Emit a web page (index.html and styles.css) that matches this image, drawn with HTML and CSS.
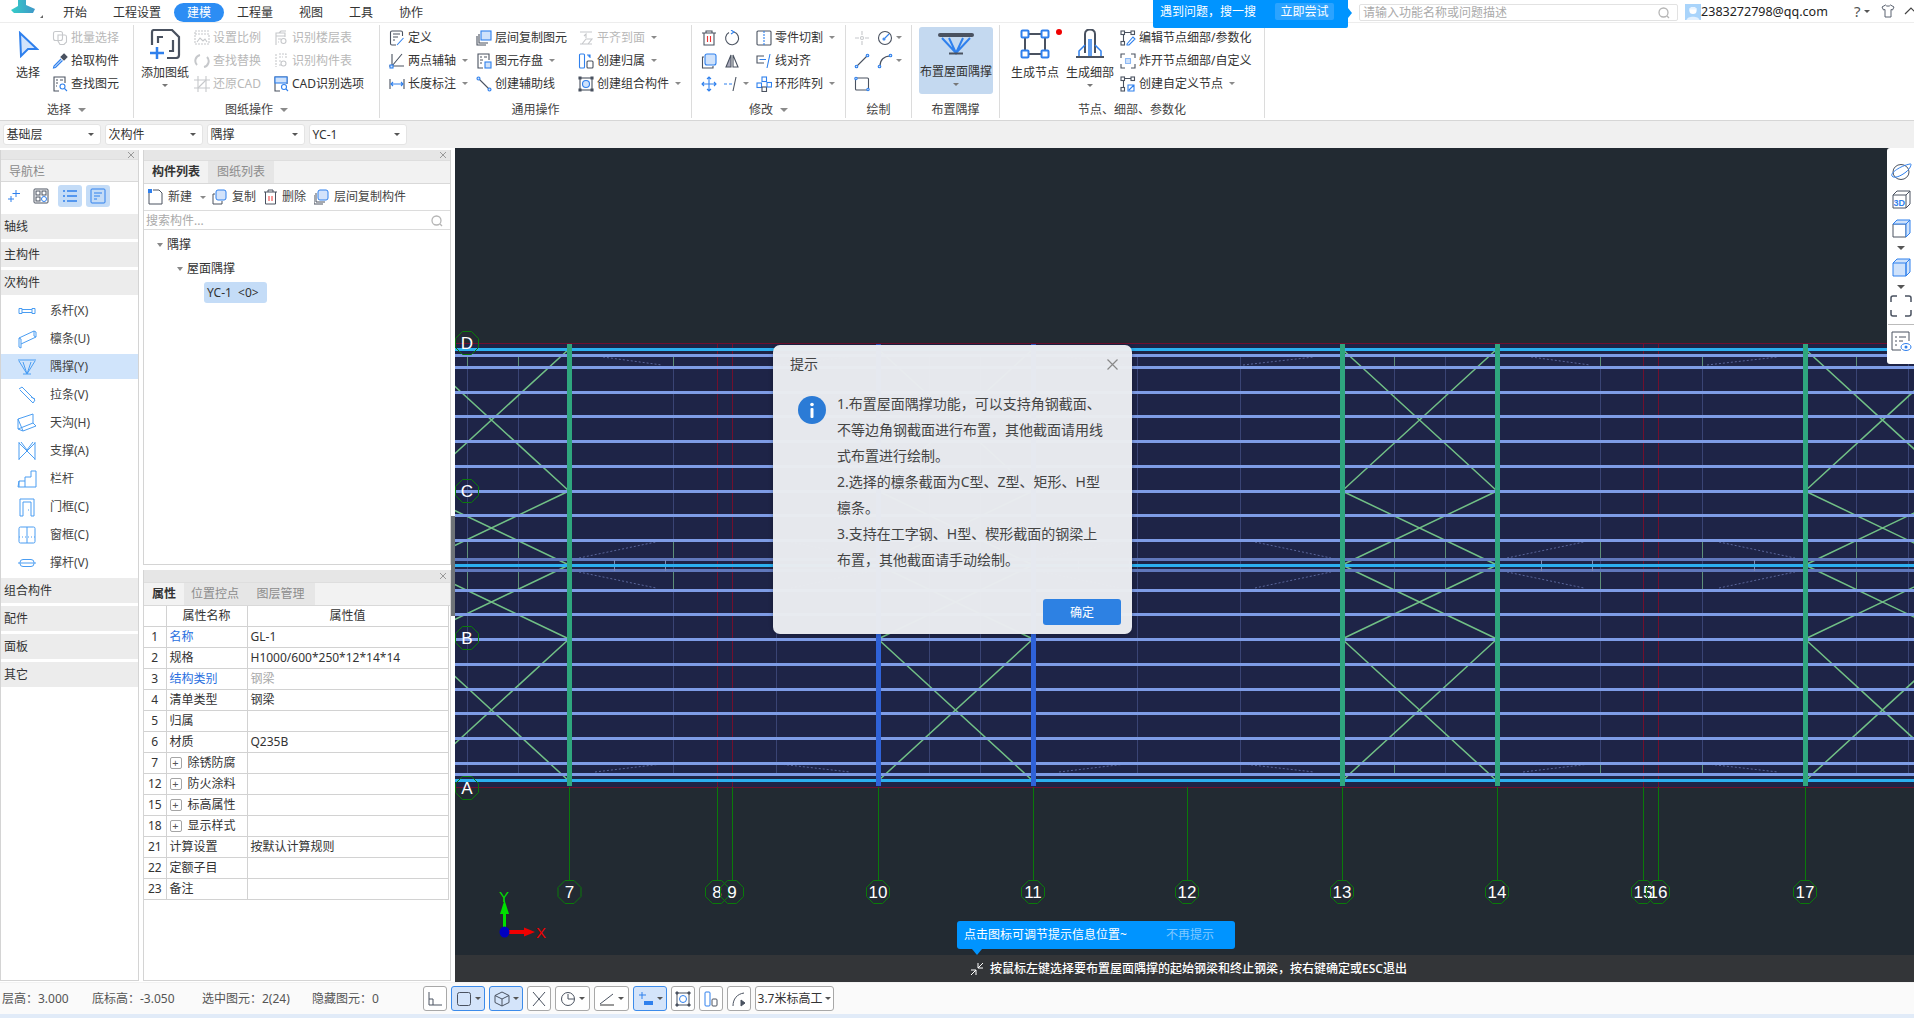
FILE: index.html
```html
<!DOCTYPE html>
<html lang="zh-CN">
<head>
<meta charset="utf-8">
<title>建模</title>
<link rel="stylesheet" href="styles.css">
</head>
<body>
<div class="app">

<header class="menubar">
  <div class="logo">
    <svg width="50" height="23" viewBox="0 0 50 23"><defs><linearGradient id="lg" x1="0" x2="1"><stop offset="0" stop-color="#35cdc8"/><stop offset="1" stop-color="#3f97c8"/></linearGradient></defs><path d="M18 0H26V5L35 9L33 13H14L11 10L18 6Z" fill="url(#lg)"/><path d="M43 15V18H40Z" fill="#666"/></svg>
  </div>
  <nav class="tabs">
    <span class="tab">开始</span><span class="tab">工程设置</span><span class="tab on">建模</span><span class="tab">工程量</span><span class="tab">视图</span><span class="tab">工具</span><span class="tab">协作</span>
  </nav>
  <div class="banner"><span>遇到问题，搜一搜</span><b>立即尝试</b></div>
  <div class="search"><span>请输入功能名称或问题描述</span><svg width="12" height="12" viewBox="0 0 12 12" class="lens"><circle cx="5.5" cy="5.5" r="4.5"/><path d="M9 9L11 11"/></svg></div>
  <svg class="avatar" width="16" height="16" viewBox="0 0 16 16"><rect width="16" height="16" fill="#a9d4fb"/><circle cx="8" cy="6.5" r="3.6" fill="#fff"/><path d="M4 5.5C4 2 12 2 12 5.5Z" fill="#e9f4ff"/><path d="M1.500 16C2 11.500 14 11.500 14.500 16Z" fill="#e4f1fe"/></svg>
  <span class="email">2383272798@qq.com</span>
  <span class="help">?</span><i class="dd tiny"></i>
  <svg class="shirt" width="14" height="14" viewBox="0 0 14 14"><path d="M4.500 1L1 3L2.500 6L4 5.500V13H10V5.500L11.500 6L13 3L9.500 1C9 2.500 5 2.500 4.500 1Z"/></svg>
  <svg class="caret" width="14" height="8" viewBox="0 0 14 8"><path d="M1 7L7 1L13 7"/></svg>
</header>

<section class="ribbon">
  <div class="group g1">
    <div class="gbody">
      <div class="big bsel">
        <svg class="bigic" width="22" height="27" viewBox="0 0 22 27"><path d="M3 2L20 18H11L4 25Z" fill="#d3e3fb" stroke="#2f80ed" stroke-width="2"/></svg>
        <span>选择</span>
      </div>
      <div class="col">
        <div class="ri off"><svg class="ic g" viewBox="0 0 16 16"><rect x="1.500" y="1.500" width="9" height="9" rx="2"/><path d="M6 5H13C14 5 14.500 6 14.500 7V12L12 14.500H8L6 11Z"/></svg><span>批量选择</span></div>
        <div class="ri"><svg class="ic" viewBox="0 0 16 16"><path d="M12 1L15 4L12 7L9 4Z" fill="#4a5260"/><path d="M9 6L2 13L1.500 15L3.500 14.500L10.500 7.500" stroke="#2f80ed" fill="#cfe2fb"/></svg><span>拾取构件</span></div>
        <div class="ri"><svg class="ic" viewBox="0 0 16 16"><path d="M7 15H2V1H13V7"/><path d="M4 4H6M8 4H11M4 7H6M4 10H5"/><circle class="bl" cx="10.500" cy="10.500" r="2.500"/><path class="bl" d="M12.500 12.500L15 15"/></svg><span>查找图元</span></div>
      </div>
    </div>
    <div class="glabel">选择<i class="dd big-dd"></i></div>
  </div>

  <div class="group g2">
    <div class="gbody">
      <div class="big badd">
        <svg class="bigic" width="32" height="30" viewBox="0 0 32 30"><g fill="none" stroke="#4a5260" stroke-width="2.200"><path d="M3 16V3C3 2 4 1 5 1H23L30 8V26C30 28 29 29 27 29H18"/><path d="M9 14V8H14M24 11V22H20"/></g><path d="M8 18V30M1 24H15" stroke="#2f80ed" stroke-width="2.500"/></svg>
        <span>添加图纸</span><i class="dd"></i>
      </div>
      <div class="col c79">
        <div class="ri off"><svg class="ic g" viewBox="0 0 16 16"><path d="M1 1H15M1 4H15V14H1V1" stroke-dasharray="2 1"/><path d="M3 12L6 8L9 11L11 9L13 12"/></svg><span>设置比例</span></div>
        <div class="ri off"><svg class="ic g" viewBox="0 0 16 16"><path d="M3 12A6 6 0 0 1 6 2M13 4A6 6 0 0 1 10 14" stroke-width="2"/></svg><span>查找替换</span></div>
        <div class="ri off"><svg class="ic g" viewBox="0 0 16 16"><path d="M4 0V16M12 0V16M0 4H16M0 12H16"/><path d="M4 12L12 4"/></svg><span>还原CAD</span></div>
      </div>
      <div class="col">
        <div class="ri off"><svg class="ic g" viewBox="0 0 16 16"><path d="M3 15V3H12V7M3 6H12M6 3L8 1H13"/><path d="M5 9H8M5 12H6"/><circle cx="10.500" cy="11" r="2.500"/></svg><span>识别楼层表</span></div>
        <div class="ri off"><svg class="ic g" viewBox="0 0 16 16" stroke-dasharray="2 1"><path d="M3 1V14M6 1H13V6M6 4H10M6 8H9M6 12H8"/><circle cx="10.500" cy="10.500" r="2.500" stroke-dasharray="none"/></svg><span>识别构件表</span></div>
        <div class="ri"><svg class="ic" viewBox="0 0 16 16"><path d="M7 15H2V1H14V8"/><rect class="blf" x="2" y="1" width="12" height="6"/><circle class="bl" cx="11" cy="11" r="2.500"/><path class="bl" d="M13 13L15 15"/></svg><span>CAD识别选项</span></div>
      </div>
    </div>
    <div class="glabel">图纸操作<i class="dd big-dd"></i></div>
  </div>

  <div class="group g3">
    <div class="gbody">
      <div class="col c87">
        <div class="ri"><svg class="ic" viewBox="0 0 16 16"><path d="M7 15H3C2 15 1.500 14.500 1.500 13.500V2.500C1.500 1.500 2 1 3 1H12C13 1 13.500 1.500 13.500 2.500V6"/><path d="M4 4H11M4 7H9M4 10H6"/><path class="bl" d="M8 15L14.500 8"/></svg><span>定义</span></div>
        <div class="ri"><svg class="ic" viewBox="0 0 16 16"><path d="M3 15V1M0 13H15M3 13L13 1"/><rect class="blf" x="1" y="12" width="3" height="3"/></svg><span>两点辅轴</span><i class="dd"></i></div>
        <div class="ri"><svg class="ic" viewBox="0 0 16 16"><path d="M1 3V13M15 3V13"/><path class="bl" d="M2 8H14M4 6L2 8L4 10M12 6L14 8L12 10"/></svg><span>长度标注</span><i class="dd"></i></div>
      </div>
      <div class="col c102">
        <div class="ri"><svg class="ic" viewBox="0 0 16 16"><path d="M1 6V15H10"/><path d="M3 4V13H12"/><rect class="blf" x="5" y="1" width="10" height="9"/></svg><span>层间复制图元</span></div>
        <div class="ri"><svg class="ic" viewBox="0 0 16 16"><path d="M7 15H2V1H13V7"/><path d="M4 4H6M8 4H11M4 7H7M4 10H6"/><rect class="blf" x="9" y="9" width="6" height="6"/></svg><span>图元存盘</span><i class="dd"></i></div>
        <div class="ri"><svg class="ic" viewBox="0 0 16 16"><path d="M3 3L13 13"/><circle class="blf" cx="2.500" cy="2.500" r="1.500"/><circle class="blf" cx="13.500" cy="13.500" r="1.500"/></svg><span>创建辅助线</span></div>
      </div>
      <div class="col">
        <div class="ri off"><svg class="ic g" viewBox="0 0 16 16"><path d="M2 2H14M2 14H14M4 14L8 9L14 9L10 14M8 8V4L6 6"/></svg><span>平齐到面</span><i class="dd"></i></div>
        <div class="ri"><svg class="ic" viewBox="0 0 16 16"><rect class="bl" x="1.500" y="1" width="5" height="14" rx="1"/><rect x="9" y="8" width="6" height="7" rx="1"/><path class="bl" d="M9 2H12V5M10.500 3.500L12 2"/></svg><span>创建归属</span><i class="dd"></i></div>
        <div class="ri"><svg class="ic" viewBox="0 0 16 16"><rect x="2" y="2" width="12" height="12"/><path d="M1 1H3V3H1ZM13 1H15V3H13ZM1 13H3V15H1ZM13 13H15V15H13Z" fill="#4a5260"/><circle class="blf" cx="8" cy="8" r="3.500"/></svg><span>创建组合构件</span><i class="dd"></i></div>
      </div>
    </div>
    <div class="glabel">通用操作</div>
  </div>

  <div class="group g4">
    <div class="gbody">
      <div class="col c55">
        <div class="ri tw"><svg class="ic" viewBox="0 0 16 16"><path d="M1 3H15M5 3V1H11V3M3 3V15H13V3"/><path d="M6.500 6V12M9.500 6V12" stroke="#e33"/></svg><svg class="ic" viewBox="0 0 16 16"><path d="M10 2A6.500 6.500 0 1 1 5 2.500"/><path class="bl" d="M7 0L10 2L7 4"/></svg></div>
        <div class="ri tw"><svg class="ic" viewBox="0 0 16 16"><rect class="blf" x="4" y="1" width="11" height="11" rx="2"/><path d="M3 4H1.500V15H12V13"/></svg><svg class="ic" viewBox="0 0 16 16"><path d="M7 2L2 14H7Z" fill="#aab" /><path d="M9 2L14 14H9Z"/></svg></div>
        <div class="ri tw"><svg class="ic" viewBox="0 0 16 16"><path class="bl" d="M8 1V15M1 8H15M6 3L8 1L10 3M6 13L8 15L10 13M3 6L1 8L3 10M13 6L15 8L13 10"/></svg><svg class="ic" viewBox="0 0 16 16"><path class="bl" d="M0 8H3M5 8H8"/><path d="M12 1L9 15"/></svg><i class="dd nm"></i></div>
      </div>
      <div class="col">
        <div class="ri"><svg class="ic" viewBox="0 0 16 16"><rect x="1" y="1" width="14" height="14" rx="1"/><path class="bl" d="M8 1V15" stroke-dasharray="2 1"/></svg><span>零件切割</span><i class="dd"></i></div>
        <div class="ri"><svg class="ic" viewBox="0 0 16 16"><path d="M8 3H1V10H8"/><path class="bl" d="M3.500 6.500H10M14 1L11 15"/></svg><span>线对齐</span></div>
        <div class="ri"><svg class="ic" viewBox="0 0 16 16"><rect class="bl" x="6" y="1" width="4.500" height="4.500"/><rect class="bl" x="1" y="7" width="4.500" height="4.500"/><rect x="6" y="11" width="4.500" height="4.500"/><rect class="bl" x="11" y="6.500" width="4.500" height="4.500"/></svg><span>环形阵列</span><i class="dd"></i></div>
      </div>
    </div>
    <div class="glabel">修改<i class="dd big-dd"></i></div>
  </div>

  <div class="group g5">
    <div class="gbody">
      <div class="col">
        <div class="ri tw"><svg class="ic g" viewBox="0 0 16 16"><path d="M8 1V5M8 11V15M1 8H5M11 8H15"/><circle cx="8" cy="8" r="1.500"/></svg><svg class="ic" viewBox="0 0 16 16"><circle cx="8" cy="8" r="6.500"/><path class="bl" d="M8 8L12 4"/><circle class="blf" cx="7" cy="9" r="1"/></svg><i class="dd nm"></i></div>
        <div class="ri tw"><svg class="ic" viewBox="0 0 16 16"><path d="M3 13L13 3"/><circle class="blf" cx="2.500" cy="13.500" r="1.300"/><circle class="blf" cx="13.500" cy="2.500" r="1.300"/></svg><svg class="ic" viewBox="0 0 16 16"><path d="M3 13C3 7 7 3 13 3"/><circle class="blf" cx="2.500" cy="13.500" r="1.300"/><circle class="blf" cx="13.500" cy="2.500" r="1.300"/></svg><i class="dd nm"></i></div>
        <div class="ri tw"><svg class="ic" viewBox="0 0 16 16"><rect x="1.500" y="2" width="13" height="12" rx="1"/><circle class="blf" cx="2" cy="2.500" r="1.200"/><circle class="blf" cx="14" cy="13.500" r="1.200"/></svg></div>
      </div>
    </div>
    <div class="glabel">绘制</div>
  </div>

  <div class="group g6">
    <div class="gbody">
      <div class="big hot">
        <svg class="hotic" width="36" height="23" viewBox="0 0 36 23"><path d="M2 3H34" stroke="#4a5260" stroke-width="4" stroke-linecap="round"/><path d="M4 6L18 21L32 6M11 6L18 21L25 6" fill="none" stroke="#2f80ed" stroke-width="2"/><path d="M11 21.500H25" stroke="#4a5260" stroke-width="2"/></svg>
        <span>布置屋面隅撑</span><i class="dd"></i>
      </div>
    </div>
    <div class="glabel">布置隅撑</div>
  </div>

  <div class="group g7">
    <div class="gbody">
      <div class="big bnode">
        <svg class="bigic" width="30" height="30" viewBox="0 0 30 30"><path d="M8 5H22M8 25H22M5 8V22M25 8V22" stroke="#4a5260" stroke-width="2"/><g fill="#fff" stroke="#2f80ed" stroke-width="2"><rect x="1.500" y="1.500" width="7" height="7" rx="1"/><rect x="21.500" y="1.500" width="7" height="7" rx="1"/><rect x="1.500" y="21.500" width="7" height="7" rx="1"/><rect x="21.500" y="21.500" width="7" height="7" rx="1"/></g></svg>
        <span>生成节点</span><i class="dot"></i>
      </div>
      <div class="big bdetail">
        <svg class="bigic" width="30" height="30" viewBox="0 0 30 30"><path d="M10 24V5C10 -1 20 -1 20 5V24" fill="none" stroke="#4a5260" stroke-width="2"/><path d="M10 16L4 22V27M20 16L26 22V27M14 27V10M16 27V10" fill="none" stroke="#2f80ed" stroke-width="1.500"/><path d="M1 28H29" stroke="#4a5260" stroke-width="2"/></svg>
        <span>生成细部</span><i class="dd"></i>
      </div>
      <div class="col">
        <div class="ri"><svg class="ic" viewBox="0 0 16 16"><path d="M3.500 4V12M5 2.500H11"/><rect x="1" y="1" width="3.500" height="3.500"/><rect x="11" y="1" width="3.500" height="3.500"/><rect x="1" y="11.500" width="3.500" height="3.500"/><path class="bl" d="M7 14L13 7L15 9L9 15H7Z"/></svg><span>编辑节点细部/参数化</span></div>
        <div class="ri"><svg class="ic" viewBox="0 0 16 16"><path d="M1 5V1H5M11 1H15V5M1 11V15H5M11 15H15V11"/><rect class="blf" x="5.500" y="5.500" width="5" height="5" stroke-dasharray="1 1"/></svg><span>炸开节点细部/自定义</span></div>
        <div class="ri"><svg class="ic" viewBox="0 0 16 16"><path d="M3.500 4V12M5 2.500H11"/><rect x="1" y="1" width="3.500" height="3.500"/><rect x="11" y="1" width="3.500" height="3.500"/><rect x="1" y="11.500" width="3.500" height="3.500"/><path class="bl" d="M8 9H14V15H8ZM9 14L14 9"/></svg><span>创建自定义节点</span><i class="dd"></i></div>
      </div>
    </div>
    <div class="glabel">节点、细部、参数化</div>
  </div>
</section>

<section class="selectors">
  <div class="sel"><span>基础层</span><i class="dd dk"></i></div>
  <div class="sel"><span>次构件</span><i class="dd dk"></i></div>
  <div class="sel"><span>隅撑</span><i class="dd dk"></i></div>
  <div class="sel"><span>YC-1</span><i class="dd dk"></i></div>
</section>

<main class="main">
  <aside class="panel nav">
    <div class="cap"><svg class="x" width="8" height="8" viewBox="0 0 8 8"><path d="M1 1L7 7M7 1L1 7"/></svg></div>
    <div class="navhead">导航栏</div>
    <div class="navtools">
      <svg class="nt" width="14" height="14" viewBox="0 0 14 14"><path d="M9 1V8M5.500 4.500H13M4 7V13M1 10H7" stroke="#2f80ed" fill="none"/></svg>
      <svg class="nt2" width="16" height="16" viewBox="0 0 16 16" fill="none" stroke="#4a5260"><rect x="1" y="1" width="14" height="14" rx="1"/><rect x="3" y="3" width="4" height="4"/><rect x="9" y="3" width="4" height="4"/><rect x="3" y="9" width="4" height="4"/><circle cx="11" cy="11" r="2.500" stroke="#2f80ed"/></svg>
      <span class="navbtn a"><svg width="16" height="16" viewBox="0 0 16 16" stroke="#2f80ed" fill="none"><path d="M5 3H15M5 8H15M5 13H15M1 3H3M1 8H3M1 13H3" stroke-width="1.500"/></svg></span>
      <span class="navbtn b"><svg width="16" height="16" viewBox="0 0 16 16" stroke="#2f80ed" fill="none"><rect x="1" y="1" width="14" height="14" rx="1"/><path d="M4 5H12M4 8H10M4 11H7"/></svg></span>
    </div>
    <div class="sec">轴线</div>
    <div class="sec">主构件</div>
    <div class="sec">次构件</div>
    <div class="navitem"><svg class="ni" viewBox="0 0 20 20"><path d="M5 8.500H15M5 11.500H15M2 7.500H5V12.500H2ZM15 7.500H18V12.500H15Z"/></svg>系杆(X)</div>
    <div class="navitem"><svg class="ni" viewBox="0 0 20 20"><path d="M2 9L17 2L19 3V8L4 15V19L2 18ZM2 9L4 10V15M17 2V7L19 8"/></svg>檩条(U)</div>
    <div class="navitem sel-on"><svg class="ni" viewBox="0 0 20 20"><path d="M1 3H19M2 4L10 17L18 4M6 5L10 17L14 5M6 17H14"/></svg>隅撑(Y)</div>
    <div class="navitem"><svg class="ni" viewBox="0 0 20 20"><path d="M2 4L5 2L18 15L16 18L3 5M14 12L18 14"/></svg>拉条(V)</div>
    <div class="navitem"><svg class="ni" viewBox="0 0 20 20"><path d="M1 6L16 1V10L1 16ZM1 16L6 18L19 13L16 10M1 6L6 18"/></svg>天沟(H)</div>
    <div class="navitem"><svg class="ni" viewBox="0 0 20 20"><path d="M2 1V19M18 1V19M2 2L18 18M18 2L2 18M4 1L10 9M16 1L10 9"/></svg>支撑(A)</div>
    <div class="navitem"><svg class="ni" viewBox="0 0 20 20"><path d="M1 18H19V2H14V8H8V12H2ZM2 12V18M8 12V18"/></svg>栏杆</div>
    <div class="navitem"><svg class="ni" viewBox="0 0 20 20"><path d="M3 19V2H17V19H14V5H6V19Z"/><path d="M11 13H12"/></svg>门框(C)</div>
    <div class="navitem"><svg class="ni" viewBox="0 0 20 20"><rect x="2" y="2" width="16" height="16" rx="1.500"/><path d="M10 2V18"/><path d="M2 12H18" stroke-dasharray="1 2"/></svg>窗框(C)</div>
    <div class="navitem"><svg class="ni" viewBox="0 0 20 20"><path d="M1 10H19"/><rect x="3" y="6.500" width="14" height="7" rx="3"/></svg>撑杆(V)</div>
    <div class="sec">组合构件</div>
    <div class="sec">配件</div>
    <div class="sec">面板</div>
    <div class="sec">其它</div>
  </aside>

  <div class="midcol">
    <section class="panel plist">
      <div class="cap c11"><svg class="x" width="8" height="8" viewBox="0 0 8 8"><path d="M1 1L7 7M7 1L1 7"/></svg></div>
      <div class="ptabs"><span class="ptab act w65">构件列表</span><span class="ptab w66">图纸列表</span></div>
      <div class="ltools">
        <svg class="lt" width="15" height="16" viewBox="0 0 15 16" fill="none" stroke="#4a5260"><path d="M1 4V15H14V4L11 1H5"/><path d="M0 0H4V4H0Z" fill="#2f80ed" stroke="none"/></svg><span class="lbl">新建</span><i class="dd"></i>
        <svg class="lt" width="15" height="16" viewBox="0 0 15 16" fill="none" stroke="#4a5260"><rect x="4" y="1" width="10" height="10" rx="2" fill="#d3e3fb" stroke="#2f80ed"/><path d="M3 5H1V15H10V12"/></svg><span class="lbl">复制</span>
        <svg class="lt" width="13" height="16" viewBox="0 0 13 16" fill="none" stroke="#4a5260"><path d="M0 3H13M4 3V1H9V3M1.500 3V15H11.500V3"/><path d="M5 7V12M8 7V12" stroke="#e33"/></svg><span class="lbl">删除</span>
        <svg class="lt" width="15" height="16" viewBox="0 0 15 16" fill="none" stroke="#4a5260"><path d="M0 6V15H9"/><path d="M2 4V13H11"/><rect x="4" y="1" width="10" height="10" rx="2" fill="#d3e3fb" stroke="#2f80ed"/></svg><span class="lbl">层间复制构件</span>
      </div>
      <div class="lsearch"><span>搜索构件...</span><svg class="lens" width="12" height="12" viewBox="0 0 12 12"><circle cx="5.500" cy="5.500" r="4.500"/><path d="M9 9L11 11"/></svg></div>
      <div class="tree">
        <div class="tn l1"><i class="tri"></i>隅撑</div>
        <div class="tn l2"><i class="tri"></i>屋面隅撑</div>
        <div class="tn l3"><span class="chip">YC-1 &nbsp;&lt;0&gt;</span></div>
      </div>
    </section>

    <section class="panel pprop">
      <div class="cap c13"><svg class="x" width="8" height="8" viewBox="0 0 8 8"><path d="M1 1L7 7M7 1L1 7"/></svg></div>
      <div class="ptabs"><span class="ptab act w41">属性</span><span class="ptab w62">位置控点</span><span class="ptab w69">图层管理</span></div>
      <table class="props">
        <colgroup><col class="cn"><col class="ck"><col class="cv"></colgroup>
        <thead><tr><th></th><th>属性名称</th><th>属性值</th></tr></thead>
        <tbody>
          <tr><td class="no">1</td><td class="link">名称</td><td>GL-1</td></tr>
          <tr><td class="no">2</td><td>规格</td><td>H1000/600*250*12*14*14</td></tr>
          <tr><td class="no">3</td><td class="link">结构类别</td><td class="mute">钢梁</td></tr>
          <tr><td class="no">4</td><td>清单类型</td><td>钢梁</td></tr>
          <tr><td class="no">5</td><td>归属</td><td></td></tr>
          <tr><td class="no">6</td><td>材质</td><td>Q235B</td></tr>
          <tr><td class="no">7</td><td><i class="plus"></i>除锈防腐</td><td></td></tr>
          <tr><td class="no">12</td><td><i class="plus"></i>防火涂料</td><td></td></tr>
          <tr><td class="no">15</td><td><i class="plus"></i>标高属性</td><td></td></tr>
          <tr><td class="no">18</td><td><i class="plus"></i>显示样式</td><td></td></tr>
          <tr><td class="no">21</td><td>计算设置</td><td>按默认计算规则</td></tr>
          <tr><td class="no">22</td><td>定额子目</td><td></td></tr>
          <tr><td class="no">23</td><td>备注</td><td></td></tr>
        </tbody>
      </table>
    </section>
  </div>

  <div class="splitter"><i></i></div>

  <section class="canvas">
    <svg class="draw" width="1459" height="834" viewBox="455 148 1459 834">
      <defs>
        <g id="brace" class="br">
          <path d="M0 349L155 491M0 491L155 349M0 491L155 565M0 565L155 491M0 565L155 639M0 639L155 565M0 639L155 781M0 781L155 639"/>
        </g>
        <g id="dash" class="da">
          <path d="M10 558L87 542M222 542L298 558M10 572L87 588M222 588L298 572M34 357L93 365M210 365L281 357M26 772L93 764M210 764L281 772"/>
        </g>
        <polygon id="oct" class="oct" points="-4.500,-11.500 4.500,-11.500 11.500,-4.500 11.500,4.500 4.500,11.500 -4.500,11.500 -11.500,4.500 -11.500,-4.500"/>
      </defs>
      <rect x="455" y="343" width="1459" height="444" class="deep"/>
      <path class="thin" d="M467 356V775M518 356V775M673 356V775M776 356V775M929 356V775M980 356V775M1137 356V775M1240 356V775M1394 356V775M1445 356V775M1600 356V775M1702 356V775M1856 356V775M1908 356V775"/>
      <path class="thing" d="M467 356V367M518 356V367M673 356V367M1394 356V367M1600 356V367M1702 356V367M1856 356V367M467 540V558M518 540V558M673 540V558M1394 540V558M1445 540V558M1600 540V558M1702 540V558M1856 540V558M467 572V590M518 572V590M673 572V590M1394 572V590M1445 572V590M1600 572V590M1702 572V590M1856 572V590M1394 762V775M1600 762V775M1702 762V775"/>
      <path class="red" d="M455 343H1914M455 787H1914M717 343V787M732 343V787M1643 343V787M1658 343V787"/>
      <use href="#dash" x="569"/><use href="#dash" x="1033"/><use href="#dash" x="1497"/>
      <use href="#brace" x="414"/><use href="#brace" x="878"/><use href="#brace" x="1342"/><use href="#brace" x="1805"/>
      <path class="hl" d="M455 355.500H1914M455 367H1914M455 392H1914M455 416.500H1914M455 441H1914M455 466H1914M455 491H1914M455 515.500H1914M455 540H1914M455 590H1914M455 614.500H1914M455 639.500H1914M455 664H1914M455 689H1914M455 713.500H1914M455 738H1914M455 763H1914M455 774.500H1914"/>
      <path class="hld" d="M455 559.500H1914M455 570.500H1914"/>
      <path class="tick" d="M614 560V571M665 560V571M1078 560V571M1129 560V571M1541 560V571M1592 560V571M1754 560V571"/>
      <path class="hc" d="M455 349.500H1914M455 565H1914M455 780.500H1914"/>
      <path class="col-g" d="M569.500 344V786M1342 344V786M1497 344V786M1805 344V786"/>
      <path class="col-b" d="M878 344V786M1033 344V786"/>
      <path class="axis" d="M569.500 787V880M717 787V880M732 787V880M878 787V880M1033 787V880M1187 787V880M1342 787V880M1497 787V880M1643 787V880M1658 787V880M1805 787V880"/>
      <g class="axt">
        <use href="#oct" x="467" y="343"/><text x="467" y="349">D</text>
        <use href="#oct" x="467" y="491"/><text x="467" y="497">C</text>
        <use href="#oct" x="467" y="638"/><text x="467" y="644">B</text>
        <use href="#oct" x="467" y="788"/><text x="467" y="794">A</text>
        <use href="#oct" x="569.500" y="892"/><text x="569.500" y="898">7</text>
        <use href="#oct" x="717" y="892"/><text x="717" y="898">8</text>
        <use href="#oct" x="732" y="892"/><text x="732" y="898">9</text>
        <use href="#oct" x="878" y="892"/><text x="878" y="898">10</text>
        <use href="#oct" x="1033" y="892"/><text x="1033" y="898">11</text>
        <use href="#oct" x="1187" y="892"/><text x="1187" y="898">12</text>
        <use href="#oct" x="1342" y="892"/><text x="1342" y="898">13</text>
        <use href="#oct" x="1497" y="892"/><text x="1497" y="898">14</text>
        <use href="#oct" x="1643" y="892"/><text x="1643" y="898">15</text>
        <use href="#oct" x="1658" y="892"/><text x="1658" y="898">16</text>
        <use href="#oct" x="1805" y="892"/><text x="1805" y="898">17</text>
      </g>
      <path d="M504.500 932V912" stroke="#00e000" stroke-width="3"/>
      <path d="M504.500 900L509 914H500Z" fill="#00e000"/>
      <path d="M505 932H525" stroke="#f00000" stroke-width="4"/>
      <path d="M535 932L524 936.500V927.500Z" fill="#f00000"/>
      <ellipse cx="504.500" cy="932" rx="5" ry="5.500" fill="#0000c0"/>
      <text x="504" y="902" class="yl">Y</text>
      <text x="541" y="938" class="xl">X</text>
    </svg>

    <div class="rtools">
      <svg width="22" height="20" viewBox="0 0 22 20" fill="none" stroke="#4a5260"><ellipse cx="11" cy="10" rx="8" ry="7.500"/><path d="M2 14C0 11 10 4 20 2C22 1 21 6 16 10C11 14 4 17 2 14Z" stroke="#2f80ed"/></svg>
      <svg width="20" height="20" viewBox="0 0 20 20" fill="none" stroke="#4a5260"><path d="M2 5H15V18H2ZM2 5L6 1H19V14L15 18M15 5L19 1"/><text x="2.500" y="15.500" class="t3d">3D</text></svg>
      <svg width="20" height="20" viewBox="0 0 20 20" fill="none" stroke="#4a5260"><path d="M2 5H15V18H2Z"/><path d="M2 5L6 1H19L15 5ZM15 5V18L19 14V1" fill="#cfe2fb" stroke="#2f80ed"/></svg>
      <i class="dd rdd"></i>
      <svg width="20" height="20" viewBox="0 0 20 20" fill="#cfe2fb" stroke="#2f80ed"><path d="M2 5H15V18H2ZM2 5L6 1H19L15 5M15 5V18L19 14V1"/></svg>
      <i class="dd rdd"></i>
      <svg width="22" height="22" viewBox="0 0 22 22" fill="none" stroke="#4a5260" stroke-width="1.500"><path d="M1 7V3C1 2 2 1 3 1H7M15 1H19C20 1 21 2 21 3V7M1 15V19C1 20 2 21 3 21H7M15 21H19C20 21 21 20 21 19V15"/></svg>
      <hr class="rsep">
      <svg width="22" height="22" viewBox="0 0 22 22" fill="none" stroke="#4a5260"><path d="M11 20H2V2H19V11"/><path d="M5 7H7M9 7H16M5 11H7M9 11H13M5 15H7"/><ellipse cx="16" cy="17" rx="5" ry="3.500" stroke="#2f80ed"/><circle cx="16" cy="17" r="1.500" fill="#2f80ed" stroke="none"/></svg>
    </div>

    <div class="hint">
      <svg width="14" height="14" viewBox="0 0 14 14" fill="none" stroke="#fff"><path d="M8 6L13 1M8 1V6H13M1 13L6 8M1 8H6V13"/></svg>
      <span>按鼠标左键选择要布置屋面隅撑的起始钢梁和终止钢梁，按右键确定或ESC退出</span>
    </div>
    <div class="tip"><span>点击图标可调节提示信息位置~</span><span class="tipoff">不再提示</span></div>

    <div class="dialog">
      <div class="dlghead"><span>提示</span><svg width="11" height="11" viewBox="0 0 11 11" class="dx"><path d="M0.500 0.500L10.500 10.500M10.500 0.500L0.500 10.500"/></svg></div>
      <div class="dlgbody">
        <svg class="info" width="28" height="28" viewBox="0 0 28 28"><circle cx="14" cy="14" r="14" fill="#2b7bd6"/><rect x="12.500" y="12" width="3" height="10" rx="1" fill="#fff"/><circle cx="14" cy="8.500" r="1.800" fill="#fff"/></svg>
        <p>1.布置屋面隅撑功能，可以支持角钢截面、不等边角钢截面进行布置，其他截面请用线式布置进行绘制。<br>2.选择的檩条截面为C型、Z型、矩形、H型檩条。<br>3.支持在工字钢、H型、楔形截面的钢梁上布置，其他截面请手动绘制。</p>
      </div>
      <div class="dlgfoot"><button class="ok">确定</button></div>
    </div>
  </section>
</main>

<footer class="status">
  <span class="st w90">层高：3.000</span>
  <span class="st w110">底标高：-3.050</span>
  <span class="st w110">选中图元：2(24)</span>
  <span class="st w111">隐藏图元：0</span>
  <div class="stools">
    <span class="sb w24"><svg class="si" viewBox="0 0 16 16"><path d="M2 1V14H15M2 8H6V14"/></svg></span>
    <span class="sb w34 on"><svg class="si" viewBox="0 0 16 16"><rect x="1.500" y="1.500" width="13" height="13" rx="2"/></svg><i class="dd dk"></i></span>
    <span class="sb w34 on"><svg class="si" viewBox="0 0 16 16"><path d="M8 1L15 4.500V11.500L8 15L1 11.500V4.500ZM1 4.500L8 8L15 4.500M8 8V15"/></svg><i class="dd dk"></i></span>
    <span class="sb w24"><svg class="si" viewBox="0 0 16 16"><path d="M2 1L14 15M14 1L2 15"/></svg></span>
    <span class="sb w35"><svg class="si" viewBox="0 0 16 16"><circle cx="8" cy="8" r="6.500"/><path d="M8 8L14 8M8 8V3"/></svg><i class="dd dk"></i></span>
    <span class="sb w35"><svg class="si" viewBox="0 0 16 16"><path d="M1 13L14 3"/><path d="M1 14H15" stroke="#999" stroke-width="2"/></svg><i class="dd dk"></i></span>
    <span class="sb w34 on"><svg class="si" viewBox="0 0 16 16"><path d="M4 1V8M1 4H8" stroke="#2f80ed"/><rect x="6" y="10" width="9" height="4" fill="#2f80ed" stroke="none"/></svg><i class="dd dk"></i></span>
    <span class="sb w24"><svg class="si" viewBox="0 0 16 16"><rect x="2" y="2" width="12" height="12"/><circle cx="8" cy="8" r="3.500" stroke="#2f80ed"/><path d="M1 1H3V3H1ZM13 1H15V3H13ZM1 13H3V15H1ZM13 13H15V15H13Z" fill="#4a5260"/></svg></span>
    <span class="sb w24"><svg class="si" viewBox="0 0 16 16"><rect x="2" y="1" width="5" height="14" rx="1" stroke="#2f80ed"/><rect x="9" y="8" width="5" height="7" rx="1"/></svg></span>
    <span class="sb w24"><svg class="si" viewBox="0 0 16 16"><path d="M2 15C2 8 6 3 13 2"/><path d="M10 9L14 12L10 15Z" fill="#4a5260"/></svg></span>
    <span class="sb w79"><span class="sbt">3.7米标高工</span><i class="dd dk"></i></span>
  </div>
</footer>
<div class="strip"></div>
</div>
</body>
</html>
```

FILE: styles.css
```css
*{box-sizing:border-box}
html,body{margin:0;padding:0;height:100%;overflow:hidden;background:#fff}
body{font:12px/16px "Noto Sans","Noto Sans CJK SC",sans-serif;color:#3a3a3a}
i{font-style:normal;display:block}
.app{width:1914px;height:1018px;display:flex;flex-direction:column}

/* generic dropdown triangle */
.dd{width:0;height:0;border-left:3px solid transparent;border-right:3px solid transparent;border-top:3px solid #8a8a8a;margin-left:6px;flex:none}
.dd.dk{border-top-color:#555}
.dd.big-dd{border-left-width:4px;border-right-width:4px;border-top-width:4px;margin-left:7px}
.dd.nm{margin-left:3px}
.dd.tiny{margin-left:3px;border-top-color:#555}

/* menu bar */
.menubar{height:23px;flex:none;display:flex;align-items:center;border-bottom:1px solid #ededed;background:#fff;position:relative;z-index:3}
.logo{width:50px;height:23px;flex:none}
.logo svg{display:block}
.tabs{display:flex;align-self:flex-end;height:19px;flex:none}
.tab{padding:0 13px;line-height:19px;color:#333;white-space:nowrap;flex:none}
.tab.on{background:#2c8df4;color:#fff;border-radius:10px}
.banner{position:relative;margin-left:717px;width:195px;height:28px;align-self:flex-start;background:#0094ff;color:#fff;display:flex;align-items:flex-start;padding:3px 0 0 7px;border-radius:0 0 2px 2px;flex:none}
.banner span{line-height:17px;width:115px;white-space:nowrap}
.banner b{font-weight:400;background:#2ba3ff;width:59px;height:17px;line-height:17px;text-align:center;border-radius:2px}
.banner::after{content:"";position:absolute;left:100%;top:8px;border-left:4px solid #0094ff;border-top:5px solid transparent;border-bottom:5px solid transparent}
.search{margin-left:11px;width:319px;height:17px;border:1px solid #e2e2e2;border-radius:2px;display:flex;align-items:center;justify-content:space-between;padding:0 7px 0 3px;color:#aaa;align-self:flex-start;margin-top:4px;flex:none}
.lens{fill:none;stroke:#b5b5b5;stroke-width:1.300}
.avatar{margin-left:7px;flex:none;align-self:flex-start;margin-top:4px}
.email{font-size:12.5px;width:126px;white-space:nowrap;color:#222;flex:none;margin-top:2px}
.help{margin-left:27px;font-size:15px;color:#555;flex:none}
.shirt{margin-left:11px;fill:none;stroke:#5a6270;flex:none}
.caret{margin-left:9px;fill:none;stroke:#444;stroke-width:1.200;flex:none}

/* ribbon */
.ribbon{height:98px;flex:none;display:flex;border-bottom:1px solid #d6d6d6;background:#fff;padding:2px 0 2px}
.group{display:flex;flex-direction:column;border-right:1px solid #dcdcdc;padding-top:1px;flex:none}
.gbody{flex:1;display:flex;min-height:0}
.glabel{height:16px;line-height:16px;display:flex;align-items:center;justify-content:center;color:#444}
.g1{width:134px}
.g2{width:246px;}
.g3{width:312px;}
.g4{width:154px;}
.g5{width:66px;}
.g6{width:88px;}
.g7{width:265px;}
.g2 .gbody{padding-left:5px}
.g3 .gbody,.g4 .gbody{padding-left:9px}
.g5 .gbody{padding-left:8px}
.g6 .gbody{padding-left:7px}
.g7 .gbody{padding-left:11px}
.col{display:flex;flex-direction:column;flex:none}
.c79{width:79px;margin-left:3px}
.c87{width:87px}
.c102{width:102px}
.c55{width:55px}
.ri{height:23px;display:flex;align-items:center;white-space:nowrap;color:#333}
.ri span{margin-left:3px}
.ri.off{color:#b8b8b8}
.ri.tw{gap:7px}
.ri.tw .dd{margin-left:-4px}
.ic{width:16px;height:16px;flex:none;fill:none;stroke:#4a5260;stroke-width:1.100}
.ic.g{stroke:#c6c8cb}
.bl{stroke:#2f80ed}
.blf{stroke:#2f80ed;fill:#cfe2fb}
.big{display:flex;flex-direction:column;align-items:center;flex:none;position:relative;width:52px;color:#333}
.big span{white-space:nowrap;line-height:16px}
.bigic{margin-top:3px;flex:none;height:30px;margin-bottom:6px}
.big .dd{margin:3px 0 0;border-top-color:#777}
.bsel{padding-left:4px}
.bsel .bigic{margin-top:5px;height:27px;margin-bottom:7px}
.bnode{width:48px}
.bdetail{width:48px;margin-left:7px}
.g7 .col{margin-left:6px}
.dot{position:absolute;width:6px;height:6px;border-radius:50%;background:#f00000;left:45px;top:3px}
.hot{width:74px;height:67px;background:#c4d9f0;border-radius:3px;margin-top:1px}
.hotic{margin-top:5px;margin-bottom:9px;flex:none}

/* selector row */
.selectors{height:27px;flex:none;background:#f0f0f0;display:flex;gap:3.500px;padding:3px 0 0 2.500px}
.sel{width:98.500px;height:21px;background:#fff;border:1px solid #e4e4e4;border-radius:3px;display:flex;align-items:center;justify-content:space-between;padding:0 6px 0 3px;color:#333}

/* main */
.main{flex:1;display:flex;min-height:0;background:#fff}
.panel{display:flex;flex-direction:column;border:1px solid #d4d4d4;background:#fff}
.cap{height:10px;background:#e6e6e6;flex:none;display:flex;justify-content:flex-end;align-items:center;padding-right:3px;border-bottom:1px solid #dedede}
.cap.c11{height:11px}
.cap.c13{height:13px}
.x{fill:none;stroke:#999;stroke-width:1}
.nav{width:139px;margin:2px 4px 1px 0;flex:none;border-top:0}
.navhead{height:22px;line-height:23px;padding-left:8px;background:#f2f2f2;color:#8a8a8a;flex:none;border-bottom:1px solid #d9d9d9}
.navtools{height:27px;margin-bottom:2px;flex:none;display:flex;align-items:center;padding-left:6px}
.nt{margin-right:12px}
.nt2{margin-right:9px}
.navbtn{width:24px;height:22px;background:#c4dcf7;border-radius:3px;display:flex;align-items:center;justify-content:center}
.navbtn.b{margin-left:4px}
.sec{height:25px;line-height:25px;margin-top:3px;padding-left:3px;background:#ececec;color:#333;flex:none}
.navitem{height:25px;margin-top:3px;display:flex;align-items:center;flex:none;padding-left:16px;gap:13px;color:#444}
.navitem.sel-on{background:#d0e4fb}
.ni{width:20px;height:20px;fill:none;stroke:#4a9df2;stroke-width:1;flex:none}

.midcol{width:308px;flex:none;display:flex;flex-direction:column;padding-top:2px}
.plist{height:415px;flex:none;border-top:0}
.pprop{flex:1;margin:5px 0 1px;border-top:0}
.ptabs{height:23px;flex:none;display:flex;background:#f2f2f2;border-bottom:1px solid #d9d9d9}
.ptab{line-height:22px;text-align:center;background:#e6e6e6;color:#8c8c8c}
.ptab.act{background:#f2f2f2;color:#333;font-weight:700}
.w65{width:64px}.w66{width:66px}.w41{width:40px}.w62{width:62px}.w69{width:69px}
.ltools{height:27px;flex:none;display:flex;align-items:center;padding-left:4px;border-bottom:1px solid #dcdcdc}
.lbl{margin-left:5px;margin-right:6px;color:#444}
.ltools .lbl:nth-of-type(1){margin-right:0}
.ltools .dd{margin:0 6px 0 8px}
.ltools .lbl:nth-of-type(2){margin-right:8px}
.ltools .lbl:nth-of-type(3){margin-right:8px}
.lsearch{height:19px;flex:none;display:flex;align-items:center;justify-content:space-between;padding:1px 7px 0 2px;color:#aaa;border-bottom:1px solid #dcdcdc}
.tree{padding-top:3px}
.tn{height:24px;display:flex;align-items:center;color:#333}
.l1{padding-left:13px}
.l2{padding-left:33px}
.l3{padding-left:60px;margin-top:-1px}
.tri{width:0;height:0;border-left:3px solid transparent;border-right:3px solid transparent;border-top:4px solid #888;margin-right:4px}
.chip{height:21px;width:63px;line-height:21px;padding-left:3px;background:#c4dcf7;border-radius:3px;color:#333;white-space:nowrap}

.props{border-collapse:collapse;table-layout:fixed;width:304px;color:#333}
.props th{font-weight:400}
.props th,.props td{height:21px;padding:0 0 0 3px;border:1px solid #d2d2d2;border-top:0;white-space:nowrap;overflow:hidden;line-height:16px}
.props th{text-align:center;padding:0;height:20px}
.props th:first-child,.props td:first-child{border-left:0}
.cn{width:22px}.ck{width:81px}.cv{width:201px}
.no{text-align:center;padding:0!important}
.link{color:#2a6fe0}
.mute{color:#a8a8a8}
.plus{display:inline-block;width:12px;height:12px;border:1px solid #a5a5a5;border-radius:2px;margin-right:6px;vertical-align:-2px;position:relative}
.plus::before{content:"+";position:absolute;left:0;right:0;top:-3px;text-align:center;font-size:11px;color:#555}

.splitter{width:4px;flex:none;position:relative}
.splitter i{position:absolute;left:0;top:368px;width:4px;height:100px;background:#6f7478}

/* canvas */
.canvas{flex:1;position:relative;background:#222a32;overflow:hidden}
.draw{position:absolute;left:0;top:0;display:block}
.deep{fill:#1e2447}
.thin{stroke:#3a4474;stroke-width:1;fill:none;shape-rendering:crispEdges}
.thing{stroke:#5d8f79;stroke-width:1;fill:none;shape-rendering:crispEdges}
.red{stroke:#70102e;stroke-width:1;fill:none;shape-rendering:crispEdges}
.br{stroke:#71c086;stroke-width:1.500;fill:none}
.da{stroke:#59659a;stroke-width:1;fill:none;stroke-dasharray:2 2}
.hl{stroke:#7e9ce6;stroke-width:3;fill:none;shape-rendering:crispEdges}
.hld{stroke:#6078bc;stroke-width:3;fill:none;shape-rendering:crispEdges}
.tick{stroke:#7e8cb8;stroke-width:1;fill:none;shape-rendering:crispEdges}
.hc{stroke:#2cb0f0;stroke-width:3;fill:none;shape-rendering:crispEdges}
.col-g{stroke:#2fa67e;stroke-width:5;fill:none;shape-rendering:crispEdges}
.col-b{stroke:#2f62d8;stroke-width:5;fill:none;shape-rendering:crispEdges}
.axis{stroke:#0a7a0a;stroke-width:1;fill:none;shape-rendering:crispEdges}
.oct{fill:none;stroke:#0a7a0a;stroke-width:1}
.axt text{fill:#fff;font:17px "Liberation Sans",sans-serif;text-anchor:middle}
.yl{fill:#00e000;font:15px "Liberation Sans",sans-serif;text-anchor:middle}
.xl{fill:#f00000;font:15px "Liberation Sans",sans-serif;text-anchor:middle}
.t3d{fill:#2f80ed;stroke:none;font:700 9px "Liberation Sans",sans-serif}

.rtools{position:absolute;right:0;top:0;width:27px;height:216px;background:#fff;display:flex;flex-direction:column;align-items:center;padding-top:14px;border-radius:3px 0 0 3px}
.rtools svg{flex:none}
.rtools svg:nth-of-type(2){margin-top:8px}
.rtools svg:nth-of-type(3){margin-top:9px}
.rtools svg:nth-of-type(4){margin-top:8px}
.rtools svg:nth-of-type(5){margin-top:6px}
.rtools svg:nth-of-type(6){margin-top:0}
.rdd{margin:7px 0 0;border-top-color:#555;border-left-width:4px;border-right-width:4px;border-top-width:4px}
.rsep{width:26px;height:1px;border:0;background:#bbb;margin:7px 0 5px}

.hint{position:absolute;left:0;right:0;bottom:0;height:27px;background:#333538;display:flex;align-items:center;padding-left:515px;color:#fff;gap:6px;font-weight:500}
.tip{position:absolute;left:502px;top:773px;width:278px;height:28px;background:#0094ff;color:#fff;border-radius:3px;display:flex;align-items:center;padding-left:7px}
.tip::after{content:"";position:absolute;left:15px;top:100%;border-top:6px solid #0094ff;border-left:5px solid transparent;border-right:5px solid transparent}
.tipoff{margin-left:39px;color:rgba(255,255,255,.5)}

.dialog{position:absolute;left:318px;top:197px;width:359px;height:289px;background:rgba(234,236,240,.985);border-radius:7px;box-shadow:0 0 4px rgba(0,0,0,.3);display:flex;flex-direction:column}
.dlghead{height:38px;display:flex;align-items:center;justify-content:space-between;padding:0 14px 0 17px;font-size:14px;color:#444;flex:none}
.dx{fill:none;stroke:#888;stroke-width:1.200}
.dlgbody{display:flex;align-items:flex-start;padding:8px 0 0 25px;flex:1;min-height:0}
.info{flex:none;margin:5px 11px 0 0}
.dlgbody p{margin:0;width:270px;font-size:14px;line-height:26px;color:#444}
.dlgfoot{display:flex;justify-content:flex-end;padding:0 11px 9px 0;flex:none}
.ok{width:78px;height:26px;background:#2d81e3;border:0;border-radius:3px;color:#fff;font:12px "Noto Sans","Noto Sans CJK SC",sans-serif}

/* status bar */
.status{height:32px;flex:none;display:flex;align-items:center;padding-left:2px;background:#fafafa;color:#555;border-top:1px solid #f2f2f2}
.st{flex:none;white-space:nowrap}
.w90{width:90px}.w110{width:110px}.w111{width:111px}
.stools{display:flex;gap:4px;flex:none}
.sb{height:25px;border:1px solid #a8a8a8;border-radius:3px;display:flex;align-items:center;justify-content:center;background:#fff}
.sb .dd{margin-left:3px}
.sb.on{background:#d4e4fa;border-color:#3c8bea}
.si{width:16px;height:16px;fill:none;stroke:#4a5260;flex:none}
.sbt{color:#333;white-space:nowrap}
.w24{width:24px}.w34{width:34px}.w35{width:35px}.w79{width:79px}
.strip{height:4px;flex:none;background:#e1ebf8}
```
